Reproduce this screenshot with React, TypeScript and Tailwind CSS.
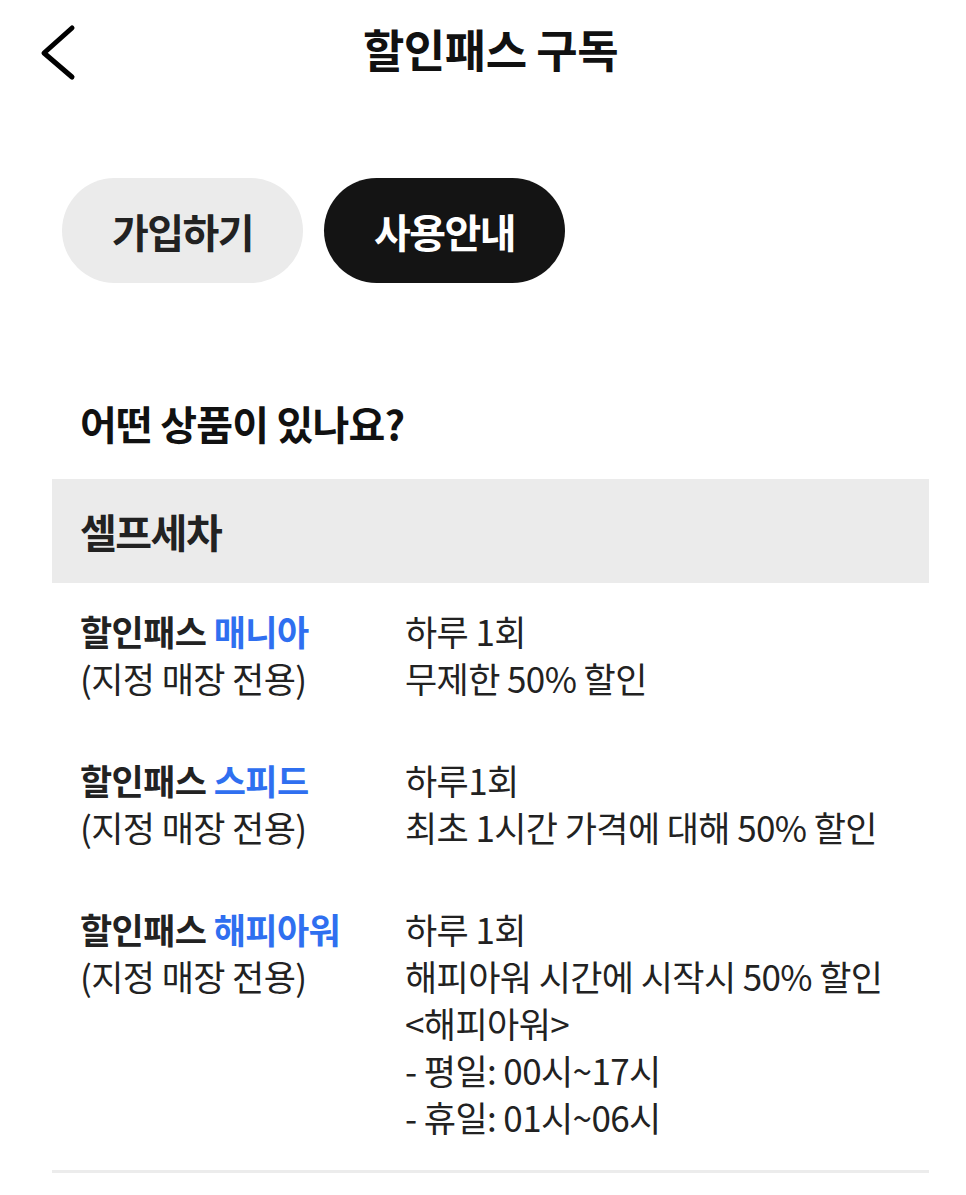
const font = { fontFamily: '"Noto Sans CJK KR", "Noto Sans", sans-serif' };

type Plan = {
  name: string;
  lines: string[];
};

const plans: Plan[] = [
  { name: "매니아", lines: ["하루 1회", "무제한 50% 할인"] },
  { name: "스피드", lines: ["하루1회", "최초 1시간 가격에 대해 50% 할인"] },
  {
    name: "해피아워",
    lines: [
      "하루 1회",
      "해피아워 시간에 시작시 50% 할인",
      "<해피아워>",
      "- 평일: 00시~17시",
      "- 휴일: 01시~06시",
    ],
  },
];

export default function App() {
  return (
    <div
      className="w-[966px] h-[1195px] bg-white text-[#111] overflow-hidden"
      style={font}
    >
      {/* header */}
      <div className="relative flex items-center justify-center h-[104px]">
        <button className="absolute left-[36px] top-[24px] text-black">
          <svg width="44" height="58" viewBox="0 0 44 58" fill="none">
            <polyline
              points="36,4 8,29 36,53"
              stroke="currentColor"
              strokeWidth="5"
              strokeLinecap="round"
              strokeLinejoin="round"
            />
          </svg>
        </button>
        <h1 className="text-[45px] font-bold tracking-[-0.5px] -mt-[6px] ml-[15px]">할인패스 구독</h1>
      </div>

      {/* tabs */}
      <div className="flex gap-[21px] px-[62px] mt-[74px]">
        <button className="w-[241px] h-[105px] rounded-full bg-[#ebebeb] text-[40px] font-bold text-[#222] tracking-[-1.5px]">
          가입하기
        </button>
        <button className="w-[241px] h-[105px] rounded-full bg-[#141414] text-[40px] font-bold text-white tracking-[-1.5px]">
          사용안내
        </button>
      </div>

      {/* content */}
      <div className="pl-[52px] pr-[37px] mt-[100px]">
        <h2 className="px-[28px] text-[40px] font-bold tracking-[-0.8px] leading-[80px]">
          어떤 상품이 있나요?
        </h2>
        <div className="mt-[16px] h-[104px] bg-[#ebebeb] flex items-center px-[28px]">
          <span className="text-[40px] font-bold tracking-[-1.5px] text-[#222]">셀프세차</span>
        </div>

        <div className="flex flex-col gap-[55px] px-[28px] pt-[24px] pb-[30px] text-[35px] leading-[47px] tracking-[-0.6px] text-[#222]">
          {plans.map((p) => (
            <div key={p.name} className="flex">
              <div className="w-[325px] shrink-0">
                <div className="font-bold">
                  할인패스 <span className="text-[#2f6ff0]">{p.name}</span>
                </div>
                <div>(지정 매장 전용)</div>
              </div>
              <div>
                {p.lines.map((l) => (
                  <div key={l}>{l}</div>
                ))}
              </div>
            </div>
          ))}
        </div>
        <div className="h-[3px] bg-[#ececec]" />
      </div>
    </div>
  );
}
